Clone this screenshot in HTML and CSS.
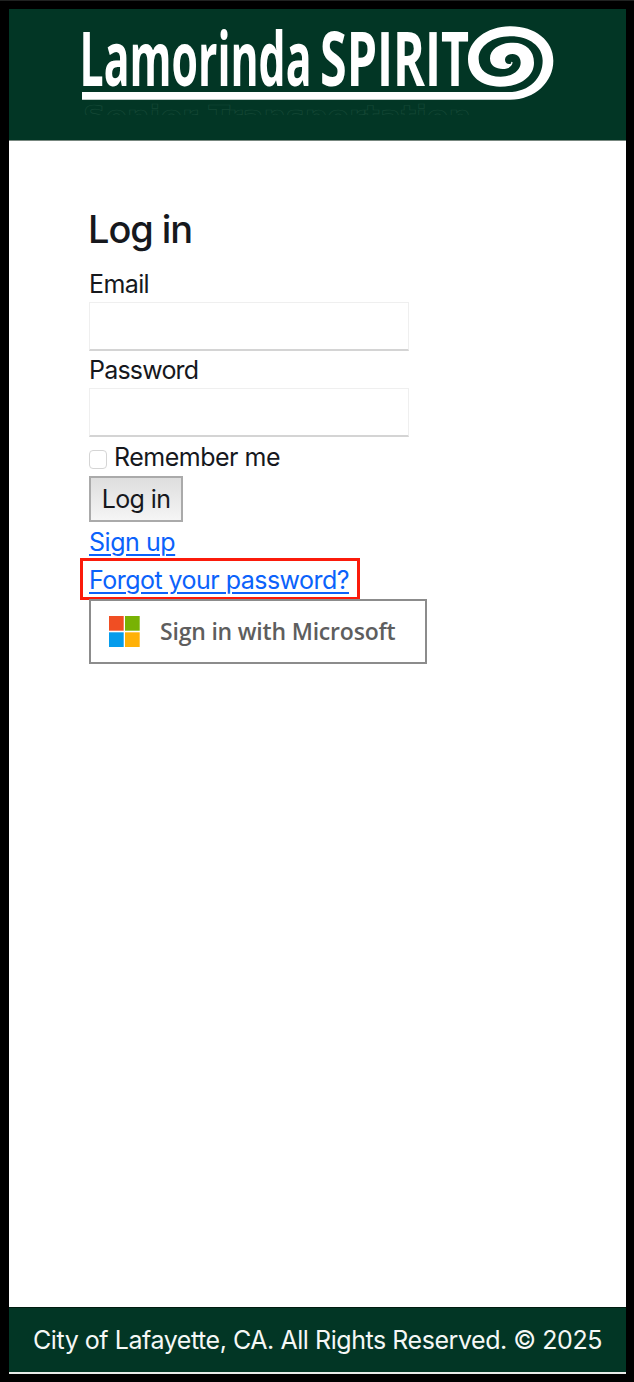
FILE: index.html
```html
<!DOCTYPE html>
<html lang="en">
<head>
<meta charset="utf-8">
<title>Log in - Lamorinda Spirit</title>
<link rel="stylesheet" href="styles.css">
</head>
<body>
<div class="page">
  <header class="header">
    <svg class="logo" viewBox="82 20 474 95" width="474" height="95" role="img" aria-label="Lamorinda Spirit">
      <g class="logo-text">
        <text x="79.5" y="86" textLength="232" lengthAdjust="spacingAndGlyphs">Lamorinda</text>
        <text x="320" y="86" textLength="149" lengthAdjust="spacingAndGlyphs">SPIRIT</text>
      </g>
      <path fill="#fff" transform="translate(460 20) scale(.33333)" d="M-1134 239H150C225 239 280 185 280 122C280 62 225 19 152 19C80 19 24 62 24 118C24 170 65 200 120 200C180 200 222 170 222 128C222 92 198 68 160 68C120 68 90 88 90 115C90 138 108 147 128 147C144 147 156 140 158 127L153 125C154 128 155 129 152 131C144 134 135 129 135 119C135 108 146 102 158 102C173 102 182 113 182 128C182 152 155 170 122 170C82 170 56 150 56 116C56 78 98 49 152 49C208 49 248 80 248 122C248 172 210 216 145 216H-1134Z"/>
      <text class="tagline" x="83" y="126.5" textLength="388" lengthAdjust="spacingAndGlyphs">Senior Transportation</text>
    </svg>
  </header>
  <main class="main">
    <h1 class="title">Log in</h1>
    <form class="form">
      <label class="label email" for="email">Email</label>
      <input class="field" id="email" type="email">
      <label class="label" for="password">Password</label>
      <input class="field" id="password" type="password">
      <label class="remember"><input class="check" type="checkbox"><span>Remember me</span></label>
      <button class="submit" type="button">Log in</button>
    </form>
    <a class="link signup" href="#">Sign up</a>
    <div class="highlight"><a class="link forgot" href="#">Forgot your password?</a></div>
    <button class="microsoft" type="button">
      <svg width="31" height="31" viewBox="0 0 31 31" aria-hidden="true">
        <path fill="#f04e23" d="M0 0h14.7v14.7H0z"/><path fill="#78b204" d="M16 0h14.7v14.7H16z"/>
        <path fill="#059cec" d="M0 16.3h14.7V31H0z"/><path fill="#ffb108" d="M16 16.3h14.7V31H16z"/>
      </svg>
      <span class="microsoft-label">Sign in with Microsoft</span>
    </button>
  </main>
  <footer class="footer"><span>City of Lafayette, CA. All Rights Reserved. © 2025</span></footer>
</div>
</body>
</html>
```
FILE: styles.css
```css
* { box-sizing: border-box; }
body {
  margin: 0;
  background: #000;
  color: #16181d;
  font: 25px/38px Inter, "Liberation Sans", sans-serif;
  font-variant-ligatures: none;
  letter-spacing: -.45px;
}
.page {
  display: flex;
  flex-direction: column;
  height: 1382px;
  padding: 8px 8px 8px 9px;
  border-top: 1px solid #202221;
}
.header {
  height: 132px;
  padding: 11px 0 0 73px;
  background: #023625;
  border-bottom: 1px solid #77877f;
}
.logo {
  display: block;
  letter-spacing: 0;
}
.logo-text {
  fill: #fff;
  font: 700 76px "Open Sans", sans-serif;
}
.tagline {
  fill: none;
  stroke: #154836;
  stroke-width: .7px;
  font: 700 30px "DejaVu Sans", sans-serif;
}
.main {
  flex: 1;
  display: flex;
  flex-direction: column;
  align-items: flex-start;
  padding: 65px 80px 0;
  background: #fff;
}
.title {
  margin: 0 0 13px -1px;
  font-size: 38px;
  line-height: 46px;
  font-weight: 500;
  letter-spacing: -1.1px;
}
.form {
  display: flex;
  flex-direction: column;
  align-items: flex-start;
}
.label {
  height: 38px;
  line-height: 39px;
  letter-spacing: -.8px;
}
.label.email {
  height: 37px;
  line-height: 38px;
  letter-spacing: -.6px;
}
.field {
  width: 320px;
  height: 49px;
  padding: 0 8px;
  border: 1px solid #efefef;
  border-bottom: 2px solid #d4d4d4;
  background: #fff;
  font: inherit;
}
.field + .label { margin-bottom: -1px; }
.remember {
  display: flex;
  align-items: center;
  height: 39px;
  gap: 7px;
  letter-spacing: -.5px;
}
.check {
  appearance: none;
  width: 18px;
  height: 19px;
  margin: 5px 0 0;
  border: 1.5px solid #d5d5d5;
  border-radius: 4px;
  background: #fff;
}
.submit {
  width: 94px;
  height: 46px;
  padding: 0;
  border: 2px solid #aaa;
  background: linear-gradient(#dedede, #f5f5f5);
  color: #16181d;
  font: inherit;
  letter-spacing: -.6px;
}
.link {
  color: #0b62fb;
  text-decoration-thickness: 1.5px;
  text-underline-offset: 3px;
}
.signup {
  height: 36px;
  line-height: 40px;
}
.highlight {
  width: 280px;
  height: 42px;
  margin-left: -9px;
  padding-left: 6px;
  border: 3px solid #fb1b0b;
  white-space: nowrap;
  letter-spacing: -.53px;
}
.microsoft {
  display: flex;
  align-items: center;
  gap: 20px;
  width: 338px;
  height: 65px;
  margin-top: -1px;
  padding: 0 0 0 18px;
  border: 2px solid #8c8c8c;
  background: #fff;
  color: #5e5e5e;
  font: 600 23px "Open Sans", sans-serif;
  letter-spacing: -.2px;
}
.microsoft-label { padding-bottom: 1px; }
.footer {
  display: flex;
  justify-content: center;
  align-items: center;
  height: 67px;
  border-top: 1px solid #001c10;
  border-bottom: 2px solid #e8ebe9;
  background: #023625;
  color: #f5f8f6;
  white-space: nowrap;
}
```
